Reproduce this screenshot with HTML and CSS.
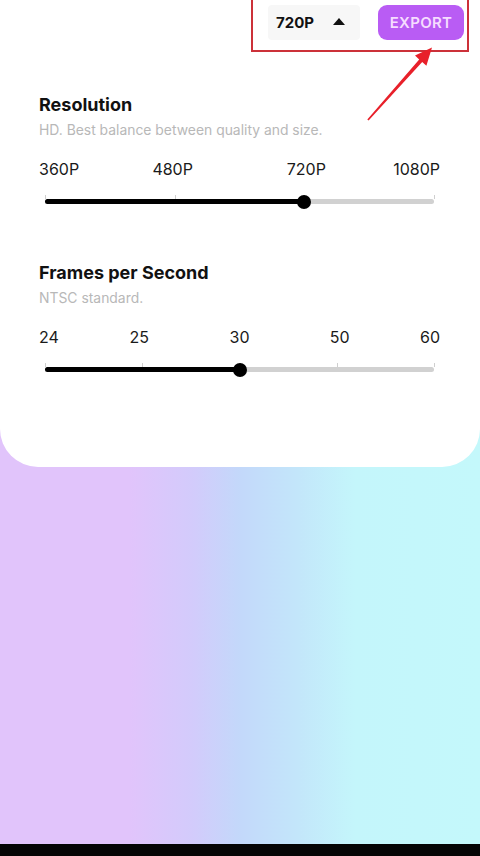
FILE: index.html
```html
<!DOCTYPE html>
<html>
<head>
<meta charset="utf-8">
<link rel="stylesheet" href="styles.css">
</head>
<body>
<div class="screen">
  <div class="card">
    <div class="topbar">
      <div class="dropdown"><span class="dd-value">720P</span><span class="caret"></span></div>
      <button class="export">EXPORT</button>
    </div>

    <div class="section s1">
      <div class="title">Resolution</div>
      <div class="sub">HD. Best balance between quality and size.</div>
      <div class="labels">
        <span class="lbl first" style="left:0%">360P</span>
        <span class="lbl" style="left:33.333%">480P</span>
        <span class="lbl" style="left:66.667%">720P</span>
        <span class="lbl last" style="left:100%">1080P</span>
      </div>
      <div class="slider">
        <span class="tick" style="left:0%"></span>
        <span class="tick" style="left:33.333%"></span>
        <span class="tick" style="left:66.667%"></span>
        <span class="tick" style="left:100%"></span>
        <div class="rail"><div class="fill" style="width:66.667%"></div></div>
        <span class="thumb" style="left:66.667%"></span>
      </div>
    </div>

    <div class="section s2">
      <div class="title">Frames per Second</div>
      <div class="sub">NTSC standard.</div>
      <div class="labels">
        <span class="lbl first" style="left:0%">24</span>
        <span class="lbl" style="left:25%">25</span>
        <span class="lbl" style="left:50%">30</span>
        <span class="lbl" style="left:75%">50</span>
        <span class="lbl last" style="left:100%">60</span>
      </div>
      <div class="slider">
        <span class="tick" style="left:0%"></span>
        <span class="tick" style="left:25%"></span>
        <span class="tick" style="left:50%"></span>
        <span class="tick" style="left:75%"></span>
        <span class="tick" style="left:100%"></span>
        <div class="rail"><div class="fill" style="width:50%"></div></div>
        <span class="thumb" style="left:50%"></span>
      </div>
    </div>
  </div>
  <div class="spacer"></div>
  <div class="navbar"></div>

  <div class="annot-box"></div>
  <svg class="annot-arrow" width="480" height="140" viewBox="0 0 480 140">
    <polygon points="367.3,119.4 419.2,59.4 415,55.6 432,47.5 426.4,65.8 422.2,62 368.6,120.6" fill="#e8202a"/>
  </svg>
</div>
</body>
</html>
```

FILE: styles.css
```css
html, body {
  margin: 0;
  padding: 0;
}
body {
  font-family: Inter, "Noto Sans", "Liberation Sans", sans-serif;
  color: #111;
}
.screen {
  position: relative;
  width: 480px;
  height: 856px;
  display: flex;
  flex-direction: column;
  background: linear-gradient(to right, #e1c4fb 0%, #e1c4fb 27%, #d3cbfb 40%, #c3d8fa 50%, #c3e6fa 62%, #c4f6fb 74%, #c4f8fb 100%);
  overflow: hidden;
}
.card {
  background: #fff;
  height: 467px;
  border-radius: 0 0 38px 38px;
  box-sizing: border-box;
}
.topbar {
  display: flex;
  justify-content: flex-end;
  align-items: flex-start;
  gap: 18px;
  padding: 5px 16px 0 0;
  height: 40px;
  box-sizing: border-box;
}
.dropdown {
  width: 92px;
  height: 35px;
  background: #f7f7f7;
  border-radius: 4px;
  display: flex;
  align-items: center;
  padding-left: 8px;
  box-sizing: border-box;
}
.dd-value {
  font-size: 15px;
  font-weight: 700;
  color: #111;
  width: 57px;
}
.caret {
  width: 0;
  height: 0;
  border-left: 6.5px solid transparent;
  border-right: 6.5px solid transparent;
  border-bottom: 7px solid #111;
  margin-top: -3px;
}
.export {
  width: 86px;
  height: 35px;
  border: none;
  border-radius: 9px;
  background: #b95cf4;
  color: #f6dcff;
  font-family: inherit;
  font-size: 15px;
  font-weight: 600;
  letter-spacing: 0.3px;
  padding: 0;
}
.section {
  padding: 0 40px 0 39px;
}
.s1 { margin-top: 55px; }
.s2 { margin-top: 52px; }
.title {
  font-size: 18px;
  line-height: 20px;
  font-weight: 700;
  color: #111;
}
.sub {
  margin-top: 7px;
  font-size: 13.9px;
  line-height: 16px;
  color: #b8b8b8;
}
.labels {
  position: relative;
  height: 20px;
  margin-top: 21px;
}
.lbl {
  position: absolute;
  top: 0;
  font-size: 16px;
  line-height: 20px;
  color: #1a1a1a;
  transform: translateX(-50%);
  white-space: nowrap;
}
.lbl.first { transform: none; }
.lbl.last { transform: translateX(-100%); }
.slider {
  position: relative;
  height: 20px;
  margin: 12px 6px 0 6px;
}
.tick {
  position: absolute;
  top: 4px;
  width: 1px;
  height: 4px;
  background: #cfcfcf;
}
.rail {
  position: relative;
  top: 8px;
  height: 5px;
  border-radius: 3px;
  background: #d1d1d1;
}
.fill {
  height: 5px;
  border-radius: 3px;
  background: #000;
}
.thumb {
  position: absolute;
  top: 3.5px;
  width: 14px;
  height: 14px;
  margin-left: -7px;
  border-radius: 50%;
  background: #000;
}
.spacer { flex: 1; }
.navbar {
  height: 12px;
  background: #050505;
}
.annot-box {
  position: absolute;
  left: 251px;
  top: -3px;
  width: 214px;
  height: 51px;
  border: 2px solid #cc3139;
}
.annot-arrow {
  position: absolute;
  left: 0;
  top: 0;
}
```
